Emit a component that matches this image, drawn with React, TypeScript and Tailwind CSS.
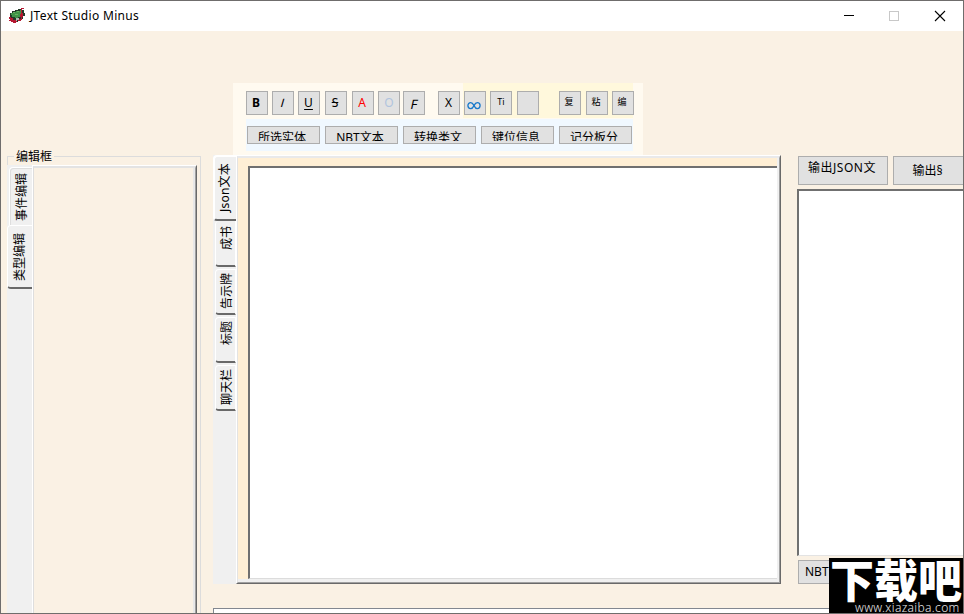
import React from "react";

const BTN =
  "shrink-0 flex justify-center overflow-hidden whitespace-nowrap border border-[#adadad] bg-[#e1e1e1]";

function Tool({
  gap,
  children,
  cls = "",
  size = "text-[12px] leading-[22px]",
}: {
  gap: string;
  children?: React.ReactNode;
  cls?: string;
  size?: string;
}) {
  return <button className={`${BTN} h-6 w-[22px] ${size} ${gap} ${cls}`}>{children}</button>;
}

const SMALL = "text-[9px] leading-[19px]";

function AppIcon() {
  return (
    <svg width="18" height="18" viewBox="0 0 18 18" shapeRendering="crispEdges">
      <path d="M4 4h3V3h3V2h4v1h2v3h1v3h-2v3h-2v2h-3v1H6v-1H4v-2H2V6h2z" fill="#233a28" />
      <path d="M5 5h3V4h4V3h2v3h-1v2h-1v2h-2v1H7v-1H4V8H3V6h2z" fill="#3f9447" />
      <path d="M5 5h2v1H5zM9 4h2v1H9zM7 7h3v1H7z" fill="#69b461" />
      <path d="M13 1h3v1h-2v4h1v4h-1v2h-1v-2h-1V7h1zM1 10h2v1h2v2h3v-1h1v3H8v1H5v-1H3v-1H1v-1h1v-1H1zM10 12h4v1h-1v1h-3z" fill="#b51731" />
      <path d="M8 11h3v2H9v1H8z" fill="#aebbb0" />
    </svg>
  );
}

function TitleBar() {
  return (
    <header className="flex h-[30px] shrink-0 items-center bg-white pl-[7px] pr-[17px]">
      <AppIcon />
      <span className="ml-[4px] flex-1 text-[12px] leading-[18px] tracking-[0.33px]">JText Studio Minus</span>
      <svg width="102" height="12" viewBox="0 0 102 12" fill="none" shapeRendering="crispEdges">
        <path d="M0 5.5h10" stroke="#000" />
        <rect x="45.5" y="1.5" width="9" height="9" stroke="#c8c8c8" />
        <path d="M91 1l10 10M101 1L91 11" stroke="#000" strokeWidth="1.1" shapeRendering="auto" />
      </svg>
    </header>
  );
}

function SideText({ children, cls = "" }: { children: React.ReactNode; cls?: string }) {
  return (
    <span
      className={`rotate-180 whitespace-nowrap text-[12px] leading-[14px] [text-orientation:sideways] [writing-mode:vertical-rl] ${cls}`}
    >
      {children}
    </span>
  );
}

function EditorGroup() {
  return (
    <fieldset className="ml-[6px] mt-[119px] flex h-[463px] w-[194px] min-w-0 flex-col border border-b-0 border-[#dcdcdc]">
      <legend className="ml-[6px] h-[13px] px-[2px] text-[12px] leading-[14px]">编辑框</legend>
      <div className="-ml-px mt-[2px] flex h-[448px] w-[190px]">
        <div className="w-[25px] shrink-0 bg-[#f0f0f0]">
          <div className="ml-[2px] mt-[2px] flex h-[58px] items-start rounded-tl-sm border-l border-t border-white pl-[5px] pt-[5px] shadow-[inset_1px_1px_#dedede]">
            <SideText>事件编辑</SideText>
          </div>
          <div className="flex h-[64px] items-start rounded-l-sm border-b-2 border-l border-t border-b-[#696969] border-l-white border-t-white pl-[5px] pt-[7px]">
            <SideText>类型编辑</SideText>
          </div>
        </div>
        <div className="flex-1 border-l border-r border-t border-l-white border-r-[#696969] border-t-white">
          <div className="h-full border-l border-r border-t-2 border-l-[#dedede] border-r-[#a0a0a0] border-t-[#e3e3e3]">
            <div className="h-full border-r-2 border-[#e8e8e8]" />
          </div>
        </div>
      </div>
    </fieldset>
  );
}

const actions = ["所选实体", "NBT文本", "转换类文", "键位信息", "记分板分"];

function Toolbar() {
  return (
    <div className="ml-[21px] mt-[52px] h-[72px] w-[410px] shrink-0 bg-[#fffaf0] pl-[13px]">
      <div className="flex h-[35px]">
        <div className="flex w-[217px] pt-2">
          <Tool gap="" cls="pr-[2px] font-bold">B</Tool>
          <Tool gap="ml-[4px]">
            <span className="-skew-x-[16deg] font-['Liberation_Sans',sans-serif]">I</span>
          </Tool>
          <Tool gap="ml-[4px]" cls="pr-px underline underline-offset-2">U</Tool>
          <Tool gap="ml-[5px]" cls="pr-[2px] line-through">S</Tool>
          <Tool gap="ml-[5px]" cls="pr-[2px] text-[#ff0000]">A</Tool>
          <Tool gap="ml-[4px]" cls="text-[#b0c4de]">O</Tool>
          <Tool gap="ml-[3px]" size="text-[13px] leading-[24px]">
            <span className="-skew-x-[12deg]">F</span>
          </Tool>
          <Tool gap="ml-[13px]" cls="pr-px">X</Tool>
        </div>
        <div className="flex w-[170px] bg-[#fff8dc] pl-px pt-2">
          <Tool gap="" cls="items-center pr-[2px]">
            <svg width="14" height="9" viewBox="0 0 14 9" className="mt-[5px] shrink-0" fill="none" stroke="#1879ca" strokeWidth="1.3">
              <path d="M7 4.6C6 2.6 5 1.6 3.7 1.6a2.8 3 0 0 0 0 6C5 7.6 6 6.6 7 4.6s2-3 3.3-3a2.8 3 0 0 1 0 6C9 7.6 8 6.6 7 4.6z" />
            </svg>
          </Tool>
          <Tool gap="ml-[4px]" size={SMALL}>Ti</Tool>
          <Tool gap="ml-[5px]" />
          <Tool gap="ml-[20px]" size={SMALL} cls="pr-[2px]">复</Tool>
          <Tool gap="ml-[5px]" size={SMALL} cls="pr-[2px]">粘</Tool>
          <Tool gap="ml-[4px]" size={SMALL} cls="pr-[2px]">编</Tool>
        </div>
      </div>
      <div className="mt-px flex h-[32px] w-[387px] gap-[5px] bg-[#f0f8ff] pl-px pt-[7px]">
        {actions.map((a) => (
          <button key={a} className={`${BTN} h-[18px] w-[73px] pr-[3px] text-[12px]`}>
            <span className="h-[14px] overflow-hidden pt-[4px] leading-[14px]">{a}</span>
          </button>
        ))}
      </div>
    </div>
  );
}

const tabs = [
  { name: "成书", pad: "pt-[5px]" },
  { name: "告示牌", pad: "pt-[3px]" },
  { name: "标题", pad: "pt-[3px]" },
  { name: "聊天栏", pad: "pt-[3px]" },
];

function DocumentTabs() {
  return (
    <div className="ml-px flex h-[429px] w-[568px] shrink-0">
      <div className="w-[23px] shrink-0 bg-[#f0f0f0]">
        <div className="flex h-[66px] items-start rounded-l-sm border-b-2 border-l-2 border-t-2 border-b-[#696969] border-l-white border-t-white pl-[3px] pt-[6px]">
          <SideText cls="tracking-[0.2px]">Json文本</SideText>
        </div>
        {tabs.map((t, i) => (
          <div
            key={t.name}
            className={`ml-[2px] flex items-start rounded-l-sm border-b-2 border-l border-r border-b-[#696969] border-l-white border-r-white pl-[4px] ${t.pad} ${i ? "mt-[2px] h-[46px] border-t border-t-white" : "h-[46px]"}`}
          >
            <SideText>{t.name}</SideText>
          </div>
        ))}
      </div>
      <div className="flex-1 border-b border-l border-r border-t border-b-[#696969] border-l-white border-r-[#696969] border-t-white">
        <div className="h-full border-b border-l border-r border-t-2 border-b-[#a0a0a0] border-l-[#e3e3e3] border-r-[#a0a0a0] border-t-[#e9e9ea]">
          <div className="h-full border-b-[3px] border-r-2 border-[#f0f0f0] bg-[#ffefd5] pl-[10px] pt-[8px]">
            <div className="h-full border-b border-l-2 border-t-2 border-b-[#dcdcdc] border-l-[#707070] border-t-[#707070] bg-white" />
          </div>
        </div>
      </div>
    </div>
  );
}

function OutputPanel() {
  return (
    <div className="ml-[16px] min-w-0 flex-1 pt-px">
      <div className="flex gap-[5px] pl-px">
        <button className={`${BTN} h-[29px] w-[90px] pr-[2px] text-[12px] leading-[22px] tracking-[0.5px]`}>输出JSON文</button>
        <button className={`${BTN} h-[29px] w-[70px] border-r-0 pr-[2px] text-[12px] leading-[28px]`}>输出§</button>
      </div>
      <div className="mt-[4px] h-[367px] border-b border-l-2 border-t-2 border-b-[#e3e3e3] border-l-[#707070] border-t-[#707070] bg-white" />
      <div className="ml-px mt-[4px] h-6 w-[31px] overflow-hidden border border-r-0 border-[#adadad] bg-[#e1e1e1] pl-[6px] text-[12px] leading-[22px]">
        NBT
      </div>
    </div>
  );
}

function Watermark() {
  return (
    <div className="absolute -bottom-px -right-px flex h-[56px] w-[135px] flex-col overflow-hidden bg-black text-white">
      <div className="h-[44px] origin-top-left scale-y-[1.04] whitespace-nowrap pl-[1px] text-[44px] font-black leading-[42px]">下载吧</div>
      <div className="whitespace-nowrap pl-[26px] text-[12px] font-light leading-[13px] tracking-[0.35px] text-[#e8e8e8]">
        www.xiazaiba.com
      </div>
    </div>
  );
}

export default function App() {
  return (
    <div className="relative flex h-[614px] w-[964px] flex-col overflow-hidden border border-[#6f6d6c] bg-[#faf1e4] font-['Noto_Sans','Noto_Sans_CJK_SC',sans-serif] text-black">
      <TitleBar />
      <main className="flex h-[582px]">
        <div className="w-[211px] shrink-0">
          <EditorGroup />
        </div>
        <div className="flex min-w-0 flex-1 flex-col">
          <Toolbar />
          <div className="flex">
            <DocumentTabs />
            <OutputPanel />
          </div>
          <div className="ml-px mt-auto h-[5px] shrink-0 border-l border-t border-[#828790] bg-white" />
        </div>
      </main>
      <Watermark />
    </div>
  );
}
